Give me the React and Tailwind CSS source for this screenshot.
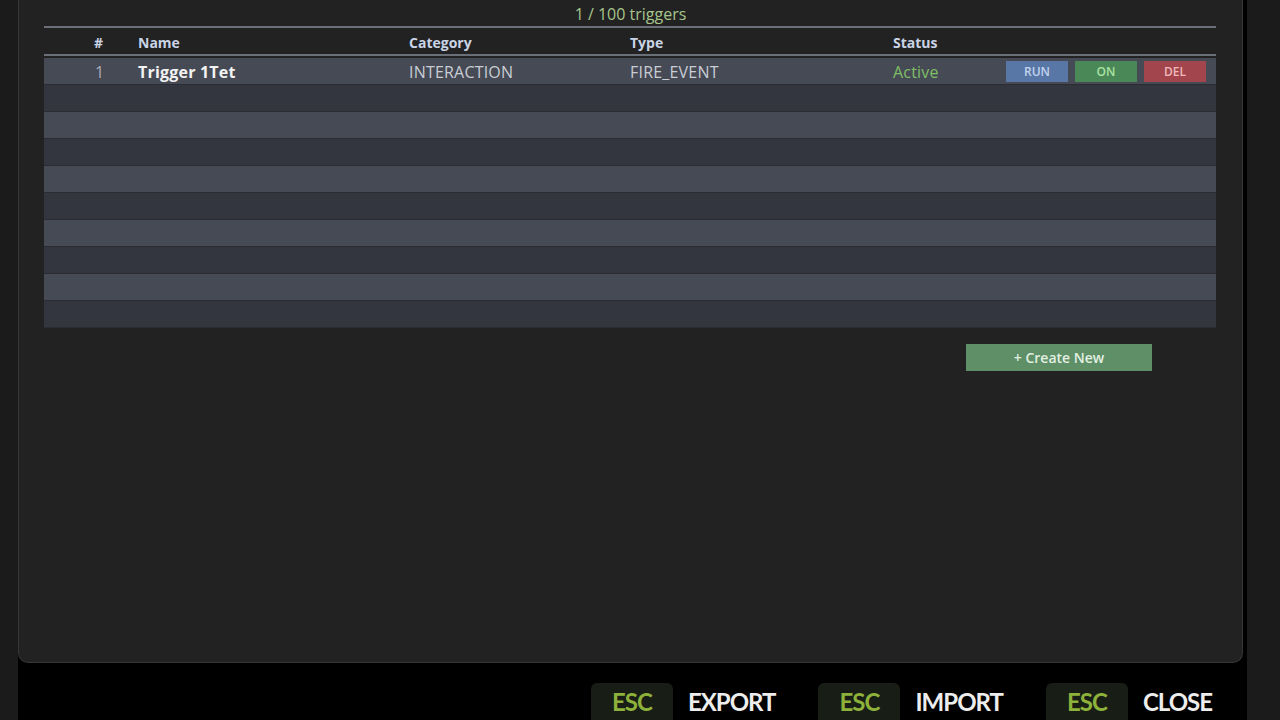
const rows = Array.from({ length: 10 }, (_, i) => i);

function TriggerRow({ index }) {
  const light = index % 2 === 0;
  return (
    <div
      className={`flex h-[27px] items-center border-b border-[#2a2c32] pt-[1px] text-[16px] tracking-[0.2px] ${
        light ? "bg-[#464a55]" : "bg-[#33353f]"
      }`}
    >
      {index === 0 && (
        <>
          <div className="w-[94px] pl-[51px] text-[#a9adb5]">1</div>
          <div className="w-[271px] font-bold text-[#f2f2f2]">Trigger 1Tet</div>
          <div className="w-[221px] text-[#c9cdd4]">INTERACTION</div>
          <div className="w-[263px] text-[#c9cdd4]">FIRE_EVENT</div>
          <div className="w-[113px] text-[#7fbf66]">Active</div>
          <div className="flex gap-[7px] text-[12px] font-semibold tracking-normal">
            <button className="h-[21px] w-[62px] bg-[#5877a6] text-[#c2d3ee]">RUN</button>
            <button className="h-[21px] w-[62px] bg-[#4b8858] text-[#a9e3a1]">ON</button>
            <button className="h-[21px] w-[62px] bg-[#a2454c] text-[#f0b9bc]">DEL</button>
          </div>
        </>
      )}
    </div>
  );
}

function FooterAction({ label }) {
  return (
    <div className="flex items-end">
      <div className="flex h-[37px] w-[82px] items-center justify-center rounded-t-[6px] bg-[#181d15] text-[24px] font-bold tracking-[-1px] text-[#8db13a]">
        ESC
      </div>
      <div className="ml-[15px] flex h-[37px] items-center text-[24px] font-bold tracking-[-1px] text-[#ededed]">
        {label}
      </div>
    </div>
  );
}

export default function App() {
  return (
    <div className="flex h-[720px] w-[1280px] overflow-hidden bg-[#1b1b1b] font-['Lato',sans-serif]">
      <div className="w-[18px] shrink-0" />
      <div className="flex w-[1229px] shrink-0 flex-col bg-black">
        <div className="h-[663px] w-[1225px] rounded-b-[10px] border border-t-0 border-[#363636] bg-[#222222] px-[25px] font-['Open_Sans',sans-serif]">
          <div className="flex h-[26px] items-center justify-center pt-[1px] text-[16px] text-[#a6c48c]">
            1 / 100 triggers
          </div>
          <div className="w-[1172px]">
            <div className="h-[2px] bg-[#6b6f77]" />
            <div className="flex h-[26px] items-center pt-[3px] text-[14px] font-bold text-[#c9d4e6]">
              <div className="w-[94px] pl-[50px]">#</div>
              <div className="w-[271px]">Name</div>
              <div className="w-[221px]">Category</div>
              <div className="w-[263px]">Type</div>
              <div className="w-[113px]">Status</div>
            </div>
            <div className="h-[2px] bg-[#6b6f77]" />
            <div className="pt-[2px]">
              {rows.map((i) => (
                <TriggerRow key={i} index={i} />
              ))}
            </div>
            <div className="mt-[16px] flex justify-end pr-[64px]">
              <button className="h-[27px] w-[186px] bg-[#5e8f67] text-[14px] font-semibold text-[#e3efe2]">
                + Create New
              </button>
            </div>
          </div>
        </div>
        <div className="flex flex-1 items-end justify-end gap-[43px] pr-[35px]">
          <FooterAction label="EXPORT" />
          <FooterAction label="IMPORT" />
          <FooterAction label="CLOSE" />
        </div>
      </div>
    </div>
  );
}
